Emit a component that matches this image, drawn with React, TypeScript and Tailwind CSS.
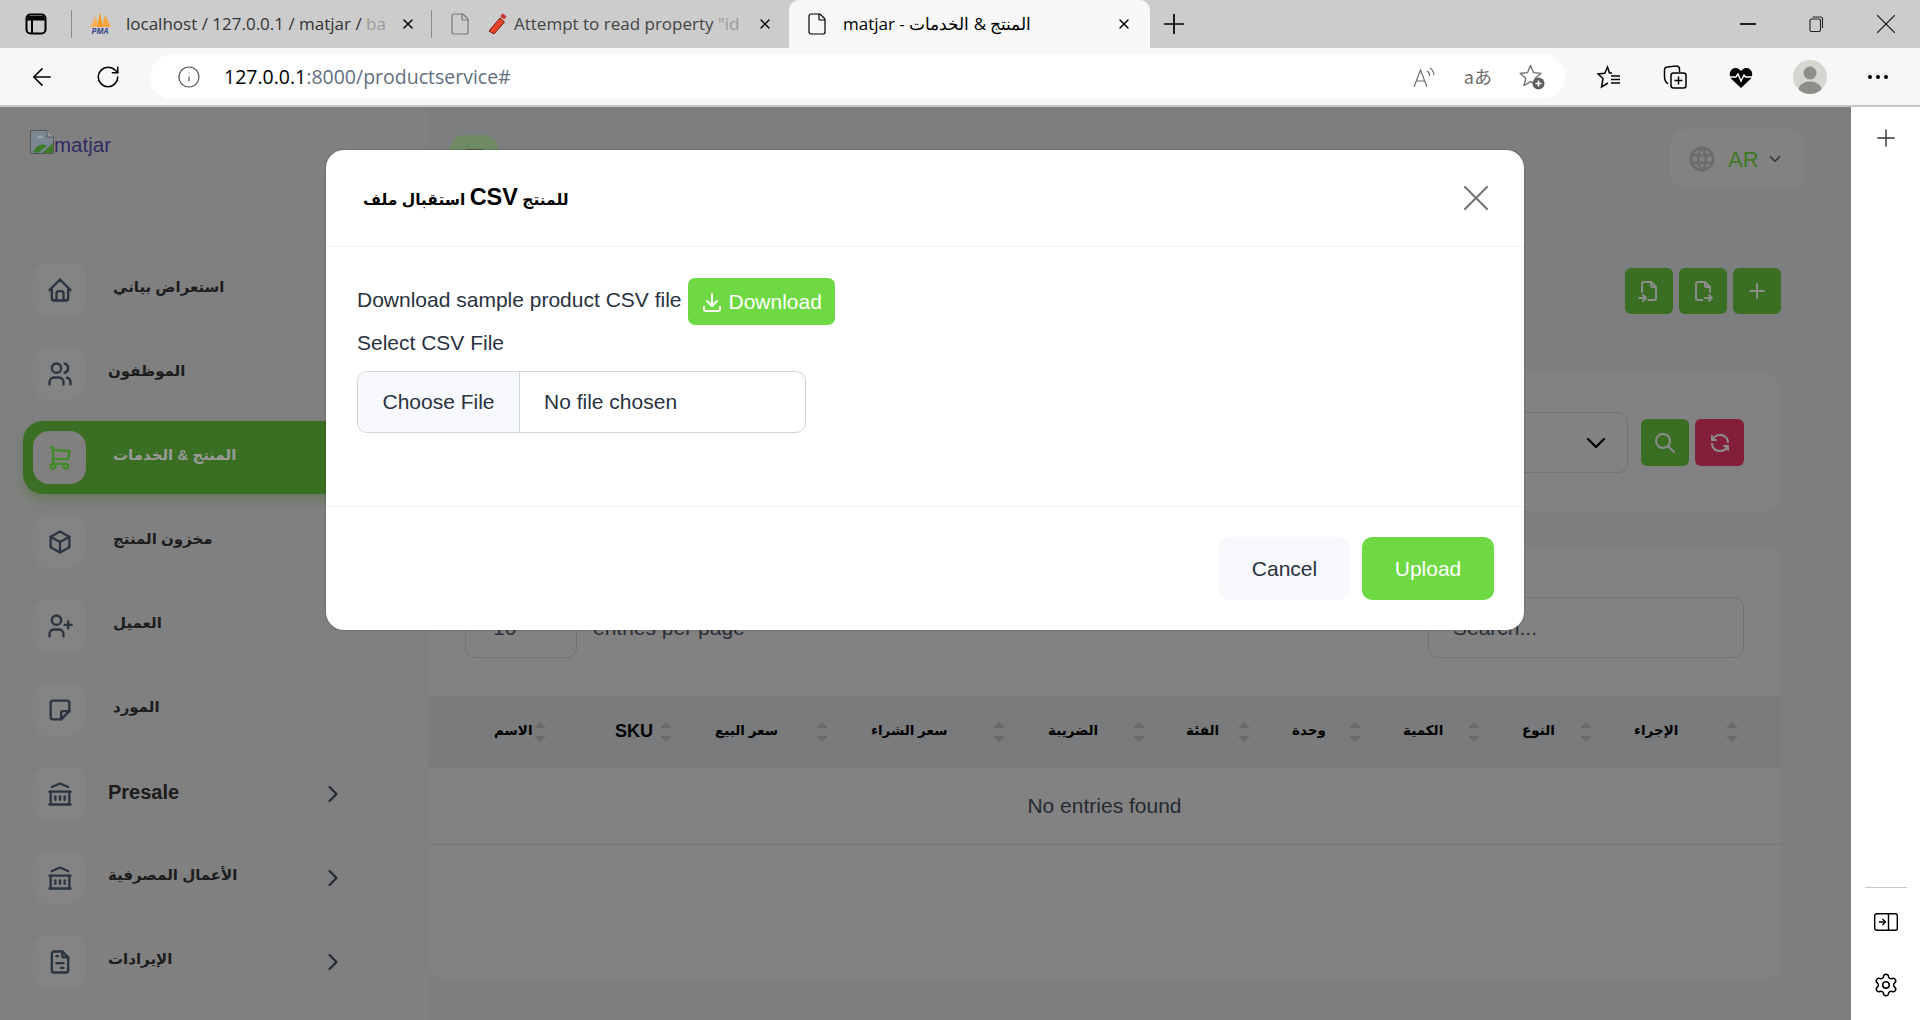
import { ArrowLeft, ChevronDown, ChevronRight, File, Info, Plus, RotateCw, Settings, X } from "lucide-react";
import {
  TbBox,
  TbBuildingBank,
  TbChevronDown,
  TbDownload,
  TbFileExport,
  TbFileImport,
  TbFileInvoice,
  TbHome,
  TbNote,
  TbPlus,
  TbRefresh,
  TbSearch,
  TbShoppingCart,
  TbUsers,
  TbWorld,
} from "react-icons/tb";

const ARABIC = "font-['Liberation_Sans','DejaVu_Sans',sans-serif]";

function CustomerIcon({ className }: { className?: string }) {
  return (
    <svg className={className} viewBox="0 0 24 24" fill="none" stroke="currentColor" strokeWidth="2" strokeLinecap="round" strokeLinejoin="round">
      <circle cx="9" cy="7" r="4" />
      <path d="M3 21v-2a4 4 0 0 1 4-4h4a4 4 0 0 1 4 4v2" />
      <path d="M16 11h6M19 8v6" />
    </svg>
  );
}

const navItems = [
  { label: "استعراض بياني", icon: TbHome, text: "ml-[27px] text-[15px]" },
  { label: "الموظفون", icon: TbUsers, text: "ml-[22px] text-[15px]" },
  { label: "المنتج & الخدمات", icon: TbShoppingCart, text: "ml-[27px] text-[15px]", active: true },
  { label: "مخزون المنتج", icon: TbBox, text: "ml-[27px] text-[15px]" },
  { label: "العميل", icon: CustomerIcon, text: "ml-[27px] text-[15px]" },
  { label: "المورد", icon: TbNote, text: "ml-[27px] text-[15px]" },
  { label: "Presale", icon: TbBuildingBank, text: "ml-[22px] text-[20px]", more: true },
  { label: "الأعمال المصرفية", icon: TbBuildingBank, text: "ml-[22px] text-[15px]", more: true },
  { label: "الإيرادات", icon: TbFileInvoice, text: "ml-[22px] text-[15px]", more: true },
];

const columns = [
  { label: "الاسم", pad: "pl-[66px] pr-[2px]" },
  { label: "SKU", pad: "pl-[67px]" },
  { label: "سعر البيع", pad: "pl-[43px]" },
  { label: "سعر الشراء", pad: "pl-[43px]" },
  { label: "الضريبة", pad: "pl-[43px]" },
  { label: "الفئة", pad: "pl-[41px]" },
  { label: "وحدة", pad: "pl-[42px]" },
  { label: "الكمية", pad: "pl-[42px]" },
  { label: "النوع", pad: "pl-[42px]" },
  { label: "الإجراء", pad: "pl-[42px]" },
];

function TabActionsIcon() {
  return (
    <svg className="h-[22px] w-[22px]" viewBox="0 0 22 22" fill="none" stroke="black" strokeWidth="2">
      <rect x="1.5" y="1.5" width="19" height="19" rx="4" />
      <path d="M1.5 6.5h19M7 6.5v14" />
      <path d="M3 3h16v3H3z" fill="black" stroke="none" />
    </svg>
  );
}

function PmaLogo() {
  return (
    <div className="mr-[14px] flex h-6 w-6 flex-col items-center">
      <svg className="h-[15px] w-6" viewBox="0 0 24 15">
        <path d="M2 15 L8 4 L10 15 Z" fill="#f7b25a" />
        <path d="M9 15 L12 0 L15 15 Z" fill="#f39a1f" />
        <path d="M14 15 L17 3 L23 15 Z" fill="#f6a63e" />
      </svg>
      <span className="text-[8px] leading-[8px] font-bold italic text-[#3a4a8a]">PMA</span>
    </div>
  );
}

function BugIcon() {
  return (
    <svg className="mr-[5px] h-6 w-6" viewBox="0 0 24 24">
      <path d="M4 19 L15 6 L19.5 10 L9 22 Z" fill="#e8442a" stroke="#6e1d0e" strokeWidth="1" />
      <rect x="16" y="2" width="5" height="4" fill="#c33" transform="rotate(40 18 4)" />
    </svg>
  );
}

function RestoreIcon() {
  return (
    <svg className="h-[16px] w-[15px]" viewBox="0 0 15 16" fill="none" stroke="#222" strokeWidth="1.1">
      <rect x="1" y="3" width="10.5" height="12.5" rx="1.5" />
      <path d="M3.5 1h8a2 2 0 0 1 2 2v9" />
    </svg>
  );
}

function ReadAloudIcon() {
  return (
    <svg className="h-[24px] w-[23px]" viewBox="0 0 23 24" fill="none" stroke="#6e6e6e" strokeWidth="1.2">
      <path d="M1 22 L7.5 5 L14 22 M3.5 16h8" />
      <path d="M14 6 A5 5 0 0 1 16.5 11 M17 3 A9 9 0 0 1 21 10" />
    </svg>
  );
}

function FavoriteAddIcon() {
  return (
    <svg className="h-[26px] w-[26px]" viewBox="0 0 26 26" fill="none">
      <path d="M11.5 1.5 L14.4 8.6 L22 9.3 L16.2 14.2 L18 21.5 L11.5 17.6 L5 21.5 L6.8 14.2 L1 9.3 L8.6 8.6 Z" stroke="#6e6e6e" strokeWidth="1.3" strokeLinejoin="round" />
      <circle cx="19.5" cy="19.5" r="6" fill="#5f5f5f" />
      <path d="M19.5 16.5v6M16.5 19.5h6" stroke="white" strokeWidth="1.6" />
    </svg>
  );
}

function FavoritesIcon() {
  return (
    <svg className="ml-[32px] h-[24px] w-[24px]" viewBox="0 0 24 24" fill="none" stroke="black" strokeWidth="1.5">
      <path d="M15 8 L12.5 8 L10.5 2 L7.8 8.3 L1 9 L6 13.5 L4.5 22 L11 18" />
      <path d="M14 11h9M14 14.5h9M14 18h9" />
    </svg>
  );
}

function CollectionsIcon() {
  return (
    <svg className="ml-[42px] h-[24px] w-[24px]" viewBox="0 0 24 24" fill="none" stroke="black" strokeWidth="1.5">
      <path d="M5 19 C2.5 17 1.5 15 1.5 12 V5 a3 3 0 0 1 3-3 L13 1 a3 3 0 0 1 3.5 3 V7" />
      <rect x="8" y="8" width="15" height="15" rx="2.5" />
      <path d="M15.5 11.5v8M11.5 15.5h8" />
    </svg>
  );
}

function HealthIcon() {
  return (
    <svg className="ml-[42px] h-[24px] w-[24px]" viewBox="0 0 24 24">
      <path d="M12 23 L2.5 14 C-1 10 1 3 6.5 3 C9 3 11 4.5 12 6 C13 4.5 15 3 17.5 3 C23 3 25 10 21.5 14 Z" fill="black" />
      <path d="M0 12h7l2-3 3 7 3-6 1.5 2H24" fill="none" stroke="white" strokeWidth="1.4" />
    </svg>
  );
}

function AvatarIcon() {
  return (
    <svg className="ml-[40px] h-[34px] w-[34px]" viewBox="0 0 34 34">
      <clipPath id="avatar-clip">
        <circle cx="17" cy="17" r="17" />
      </clipPath>
      <circle cx="17" cy="17" r="17" fill="#d6d5d0" />
      <circle cx="17" cy="13" r="6.5" fill="#8f8d89" />
      <ellipse cx="17" cy="30" rx="11.5" ry="8.5" fill="#8f8d89" clipPath="url(#avatar-clip)" />
    </svg>
  );
}

function SidePanelIcon() {
  return (
    <svg className="mb-[41px] h-[18px] w-[24px]" viewBox="0 0 24 18" fill="none" stroke="black" strokeWidth="1.4">
      <rect x="0.7" y="0.7" width="22.6" height="16.6" rx="2" />
      <path d="M14.5 0.7v16.6M5 9h6M8.5 6l3 3-3 3" />
    </svg>
  );
}

function BrokenImageIcon() {
  return (
    <svg className="h-6 w-6 shrink-0" viewBox="0 0 24 24">
      <path d="M0.5 0.5H17L23.5 7V23.5H0.5Z" fill="#7a8794" stroke="#555" />
      <path d="M17 0.5V7H23.5" fill="#999" stroke="#555" />
      <path d="M3 22 C7 14 13 13 17 16 L8 23 Z" fill="#3f7a28" />
      <path d="M12 23 L23 13 V23 Z" fill="#3f7a28" />
      <path d="M6 8 L10 5 L14 8 Z" fill="#a8a8a8" />
    </svg>
  );
}

function BrowserChrome() {
  return (
    <div className="shrink-0 font-['Open_Sans',sans-serif]">
      <div className="flex h-12 items-end bg-[#cccccc] text-[#333]">
        <div className="flex h-12 w-[71px] shrink-0 items-center pl-[25px]">
          <TabActionsIcon />
        </div>
        <div className="h-7 w-px self-center bg-[#8a8a8a]" />
        <div className="flex h-12 w-[359px] shrink-0 items-center pl-4">
          <PmaLogo />
          <span className="w-[262px] text-[17px] whitespace-nowrap">
            localhost / 127.0.0.1 / matjar / <span className="text-[#9a9a9a]">ba</span>
          </span>
          <X className="ml-3 h-4 w-4 text-black" />
        </div>
        <div className="h-7 w-px self-center bg-[#8a8a8a]" />
        <div className="flex h-12 w-[357px] shrink-0 items-center pl-[16px]">
          <File className="mr-[13px] h-6 w-6 text-[#777]" strokeWidth={1.2} />
          <BugIcon />
          <span className="w-[231px] text-[17px] whitespace-nowrap text-[#444]">
            Attempt to read property <span className="text-[#9a9a9a]">"id</span>
          </span>
          <X className="ml-[12px] h-4 w-4 text-black" />
        </div>
        <div className="flex h-12 w-[361px] shrink-0 items-center rounded-t-[10px] bg-[#f7f7f7] pl-[16px] text-black">
          <File className="mr-[14px] h-6 w-6" strokeWidth={1.2} />
          <span className="w-[273px] text-[17px] whitespace-nowrap">matjar - المنتج &amp; الخدمات</span>
          <X className="h-4 w-4 text-black" />
        </div>
        <div className="flex h-12 w-[48px] items-center justify-center">
          <Plus className="h-8 w-8 text-black" strokeWidth={1.3} />
        </div>
        <div className="ml-auto flex h-12 items-center text-[#222]">
          <div className="mr-[53px] h-[1.5px] w-[16px] bg-[#222]" />
          <div className="mr-[45px]">
            <RestoreIcon />
          </div>
          <X className="mr-[17px] h-[34px] w-[34px]" strokeWidth={0.8} />
        </div>
      </div>
      <div className="flex h-[59px] items-center border-b-2 border-[#c6c6c6] bg-[#f7f7f7]">
        <ArrowLeft className="ml-[28px] h-7 w-7 text-black" strokeWidth={1.4} />
        <RotateCw className="ml-[39px] h-[26px] w-[26px] text-black" strokeWidth={1.4} />
        <div className="ml-[29px] flex h-[45px] w-[1415px] items-center rounded-full bg-white">
          <Info className="ml-[27px] h-6 w-6 text-[#555]" strokeWidth={1.2} />
          <span className="ml-[23px] text-[19.5px]">
            <span className="text-black">127.0.0.1</span>
            <span className="text-[#5f6f80]">:8000/productservice#</span>
          </span>
          <div className="ml-auto flex items-center text-[#6e6e6e]">
            <ReadAloudIcon />
            <span className="mr-[27px] ml-[28px] text-[18px] font-['Noto_Sans_CJK_JP','Open_Sans',sans-serif]">aあ</span>
            <div className="mr-[20px]">
              <FavoriteAddIcon />
            </div>
          </div>
        </div>
        <FavoritesIcon />
        <CollectionsIcon />
        <HealthIcon />
        <AvatarIcon />
        <div className="ml-[41px] flex gap-[4px]">
          <div className="h-[4px] w-[4px] rounded-full bg-black" />
          <div className="h-[4px] w-[4px] rounded-full bg-black" />
          <div className="h-[4px] w-[4px] rounded-full bg-black" />
        </div>
      </div>
    </div>
  );
}

function SidebarNav() {
  return (
    <aside className="flex h-full w-[428px] shrink-0 flex-col bg-[#808080] pl-[23px]">
      <div className="flex h-[140.5px] items-start pt-[23px] pl-[7px] text-[20.5px] leading-6 text-[#2f2a63]">
        <BrokenImageIcon />
        <span className="mt-[3px]">matjar</span>
      </div>
      <nav className="flex w-[345px] flex-col">
        {navItems.map((item) => {
          const Icon = item.icon;
          return (
            <div
              key={item.label}
              className={`my-[5.5px] flex h-[73px] items-center rounded-l-[20px] pl-[10px] ${
                item.active ? "bg-[#3a6f23] shadow-[0_6px_12px_rgba(58,111,35,0.35)]" : ""
              }`}
            >
              <div
                className={`flex h-[53px] w-[53px] shrink-0 items-center justify-center rounded-[16px] ${
                  item.active ? "bg-[#808080] text-[#3f8a25]" : "bg-[#848484] text-[#2a3340]"
                }`}
              >
                <Icon className="h-7 w-7" />
              </div>
              <span
                className={`${item.text} -mt-[4px] font-bold ${ARABIC} ${
                  item.active ? "text-[#9a9a9a]" : "text-[#1c1c1c]"
                }`}
              >
                {item.label}
              </span>
              {item.more && <ChevronRight className="mr-[21px] ml-auto h-7 w-7 text-[#1f2731]" strokeWidth={1.8} />}
            </div>
          );
        })}
      </nav>
    </aside>
  );
}

function MainContent() {
  return (
    <main className="flex w-[1353px] shrink-0 flex-col">
      <div className="flex h-[161px] items-start">
        <div className="mt-[18px] ml-[12px] flex h-[60px] w-[160px] rounded-[16px] border border-[#7a7a7a] pt-[9px] pl-[8px]">
          <div className="flex h-[50px] w-[50px] justify-center rounded-[16px] bg-[#6f8a63] pt-[14px]">
            <div className="h-5 w-[17px] bg-[#555]" />
          </div>
        </div>
        <div className="mt-[22px] ml-[15px] h-[60px] w-[65px] rounded-[16px] border border-[#7a7a7a]" />
        <div className="mt-[22px] -mr-[23px] ml-auto flex h-[60px] w-[134px] items-center rounded-[16px] bg-[#828282] pl-[17px]">
          <TbWorld className="h-[30px] w-[30px] text-[#6c6c6c]" />
          <span className="ml-[11px] text-[22px] text-[#3d7a24]">AR</span>
          <TbChevronDown className="ml-[7px] h-[18px] w-[18px] text-[#333]" />
        </div>
      </div>
      <div className="flex h-[106px] items-start justify-end gap-[6px]">
        {[TbFileImport, TbFileExport, TbPlus].map((Icon, index) => (
          <div key={index} className="flex h-[46px] w-[48px] items-center justify-center rounded-[6px] bg-[#3a6f23] text-[#8c8c8c]">
            <Icon className="h-6 w-6" />
          </div>
        ))}
      </div>
      <section className="flex h-[137px] items-center justify-end rounded-[16px] bg-[#828282] pr-[37px]">
        <div className="flex h-[61px] w-[400px] items-center justify-end rounded-[10px] border border-[#717375] pr-[15px]">
          <ChevronDown className="h-8 w-8 text-black" strokeWidth={1.7} />
        </div>
        <div className="ml-[13px] flex h-[47px] w-[48px] items-center justify-center rounded-[6px] bg-[#3a6f23] text-[#8c8c8c]">
          <TbSearch className="h-6 w-6" />
        </div>
        <div className="ml-[6px] flex h-[47px] w-[49px] items-center justify-center rounded-[6px] bg-[#831f38] text-[#8c8c8c]">
          <TbRefresh className="h-6 w-6" />
        </div>
      </section>
      <section className="mt-[36px] h-[432px] rounded-[16px] bg-[#828282]">
        <div className="flex h-[149px] items-end px-[37px] pb-[38px]">
          <div className="flex h-[61px] w-full items-center text-[21px] text-[#2a2f38]">
            <div className="flex h-full w-[112px] items-center rounded-[10px] border border-[#717375] pl-[27px]">
              10
              <ChevronDown className="ml-6 h-3 w-3" />
            </div>
            <span className="ml-4">entries per page</span>
            <div className="ml-auto flex h-full w-[316px] items-center rounded-[10px] border border-[#717375] pl-6">Search...</div>
          </div>
        </div>
        <div className="grid h-[72px] grid-cols-[120px_124px_156px_177px_140px_105px_111px_119px_112px_146px_1fr] items-center border-b border-[#767676] bg-[#7a7b7d]">
          {columns.map((column) => (
            <div key={column.label} className={`flex items-center justify-between ${column.pad}`}>
              <span className={`font-bold text-black ${ARABIC} ${column.label === "SKU" ? "text-[18px]" : "text-[13.5px]"}`}>
                {column.label}
              </span>
              <div className="flex flex-col gap-[8px]">
                <div className="h-0 w-0 border-x-[6px] border-b-[6px] border-x-transparent border-b-[#6a6a6a]" />
                <div className="h-0 w-0 border-x-[6px] border-t-[6px] border-x-transparent border-t-[#6a6a6a]" />
              </div>
            </div>
          ))}
        </div>
        <div className="flex h-[77px] items-center justify-center border-b border-[#767676] text-[21px] text-[#252a33]">
          No entries found
        </div>
      </section>
    </main>
  );
}

function ImportModal() {
  return (
    <div className="absolute top-[43px] left-[326px] h-[480px] w-[1198px] rounded-[18px] bg-white font-['Liberation_Sans',sans-serif] shadow-[0_0_2px_rgba(0,0,0,0.4)]">
      <div className="flex h-[97px] items-center border-b border-[#f0f0f0] pr-[26px] pl-[37px]">
        <h5 className={`text-[15.5px] font-bold text-black ${ARABIC}`}>
          استقبال ملف <span className="text-[23.5px]">CSV</span> للمنتج
        </h5>
        <X className="ml-auto h-[44px] w-[44px] text-[#767676]" strokeWidth={1.2} />
      </div>
      <div className="h-[260px] border-b border-[#f0f0f0] pt-[31px] pl-[31px] text-[21px] text-[#293240]">
        <div className="flex items-center">
          <span className="-mt-[3px]">Download sample product CSV file</span>
          <button className="ml-[6px] flex h-[47px] w-[147px] items-center gap-[5px] rounded-[7px] bg-[#6fd943] pl-3 text-white">
            <TbDownload className="h-6 w-6" />
            Download
          </button>
        </div>
        <div className="mt-[6px] leading-[24px]">Select CSV File</div>
        <div className="mt-[16px] flex h-[62px] w-[449px] items-center overflow-hidden rounded-[10px] border border-[#ced4da]">
          <div className="flex h-full w-[162px] items-center justify-center border-r border-[#ced4da] bg-[#f8f9fd]">Choose File</div>
          <span className="ml-6">No file chosen</span>
        </div>
      </div>
      <div className="flex h-[123px] items-center justify-end gap-3 pr-[30px] text-[21px]">
        <button className="flex h-[63px] w-[131px] items-center justify-center rounded-[10px] bg-[#f8f9fd] text-[#293240]">Cancel</button>
        <button className="flex h-[63px] w-[132px] items-center justify-center rounded-[10px] bg-[#6fd943] text-white">Upload</button>
      </div>
    </div>
  );
}

export default function App() {
  return (
    <div className="flex h-[1020px] w-[1920px] flex-col overflow-hidden bg-white font-['Liberation_Sans',sans-serif]">
      <BrowserChrome />
      <div className="flex min-h-0 flex-1">
        <div className="relative flex w-[1851px] shrink-0 items-start overflow-hidden bg-[#7d7e80]">
          <SidebarNav />
          <MainContent />
          <ImportModal />
        </div>
        <div className="flex flex-1 flex-col items-center bg-white pt-[17px] text-[#333]">
          <Plus className="h-7 w-7" strokeWidth={1.2} />
          <div className="mt-auto mb-[25px] h-px w-[42px] bg-[#c8c8c8]" />
          <SidePanelIcon />
          <Settings className="mb-[22px] h-[26px] w-[26px] text-black" strokeWidth={1.4} />
        </div>
      </div>
    </div>
  );
}
